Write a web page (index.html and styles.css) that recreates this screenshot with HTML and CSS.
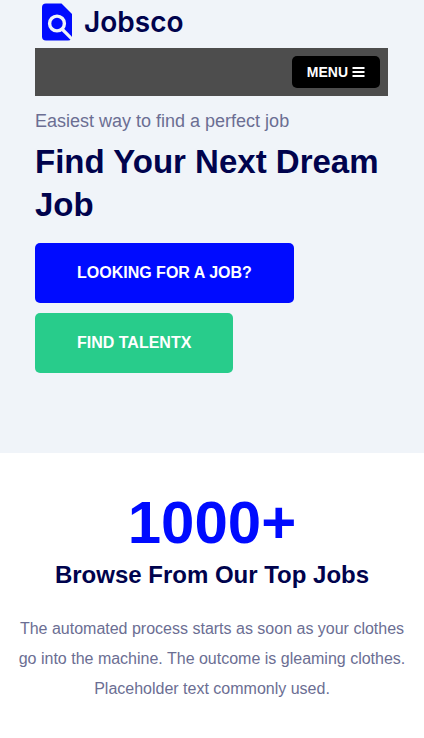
FILE: index.html
```html
<!DOCTYPE html>
<html lang="en">
<head>
<meta charset="utf-8">
<meta name="viewport" content="width=device-width, initial-scale=1">
<title>Jobsco</title>
<link rel="stylesheet" href="styles.css">
</head>
<body>
<div class="hero">
  <header>
    <a class="logo" href="#">
      <svg class="logo-mark" viewBox="0 0 30 38" aria-hidden="true">
        <path fill="#000bff" d="M4 .5h15.500L30 11v22.500q0 4-4 4H4q-4 0-4-4v-29q0-4 4-4z"/>
        <path fill="none" stroke="#f0f4f9" stroke-width="3.200" d="M19.500 25.500L31 37"/>
        <circle cx="15" cy="20.500" r="7.400" fill="#000bff" stroke="#f0f4f9" stroke-width="3.400"/>
      </svg>
      <span class="logo-name">Jobsco</span>
    </a>
    <nav class="bar">
      <button class="menu" type="button">MENU
        <svg class="menu-icon" viewBox="0 0 12 12" aria-hidden="true"><path fill="none" stroke="#fff" stroke-width="2" d="M0 2h12M0 6h12M0 10h12"/></svg>
      </button>
    </nav>
  </header>
  <p class="tagline">Easiest way to find a perfect job</p>
  <h1>Find Your Next Dream Job</h1>
  <div class="actions">
    <a class="btn" href="#">LOOKING FOR A JOB?</a>
    <a class="btn btn-green" href="#">FIND TALENTX</a>
  </div>
</div>
<main class="jobs">
  <p class="count">1000+</p>
  <h2>Browse From Our Top Jobs</h2>
  <p class="intro">The automated process starts as soon as your clothes go into the machine. The outcome is gleaming clothes. Placeholder text commonly used.</p>
</main>
</body>
</html>
```
FILE: styles.css
```css
* {
  box-sizing: border-box;
}

body {
  margin: 0;
  background: #fff;
  color: #00034d;
  font-family: "Liberation Sans", Arial, sans-serif;
}

h1, h2, p {
  margin: 0;
}

.hero {
  padding: 0 36px 80px 35px;
  background: #f0f4f9;
}

.logo {
  display: flex;
  align-items: center;
  gap: 12px;
  height: 48px;
  padding: 0 0 4px 7px;
  color: #00034d;
  text-decoration: none;
}

.logo-mark {
  width: 30px;
  height: 38px;
}

.logo-name {
  font: 600 28px/40px Inter, sans-serif;
}

.bar {
  display: flex;
  justify-content: flex-end;
  padding: 8px;
  background: #4d4d4d;
}

.menu {
  display: flex;
  align-items: center;
  gap: 4px;
  height: 32px;
  padding: 0 15px;
  border: 0;
  border-radius: 5px;
  background: #000;
  color: #fff;
  font: bold 14px "Liberation Sans", Arial, sans-serif;
}

.menu-icon {
  width: 13px;
  height: 12px;
}

.tagline {
  padding-top: 10px;
  color: #6b6e93;
  font-size: 18px;
  line-height: 30px;
}

h1 {
  margin-top: 4px;
  font-size: 33px;
  line-height: 43px;
}

.actions {
  display: flex;
  flex-direction: column;
  align-items: flex-start;
  gap: 10px;
  margin-top: 17px;
}

.btn {
  padding: 0 42px;
  border-radius: 5px;
  background: #000bff;
  color: #fff;
  font-size: 16px;
  font-weight: bold;
  line-height: 60px;
  text-decoration: none;
}

.btn-green {
  background: #28cc8b;
}

.jobs {
  padding: 34px 15px;
  text-align: center;
}

.count {
  color: #000bff;
  font-size: 60px;
  font-weight: bold;
  line-height: 72px;
}

h2 {
  font-size: 24px;
  line-height: 32px;
}

.intro {
  margin-top: 23px;
  color: #6b6e93;
  font-size: 16px;
  line-height: 30px;
}
```
